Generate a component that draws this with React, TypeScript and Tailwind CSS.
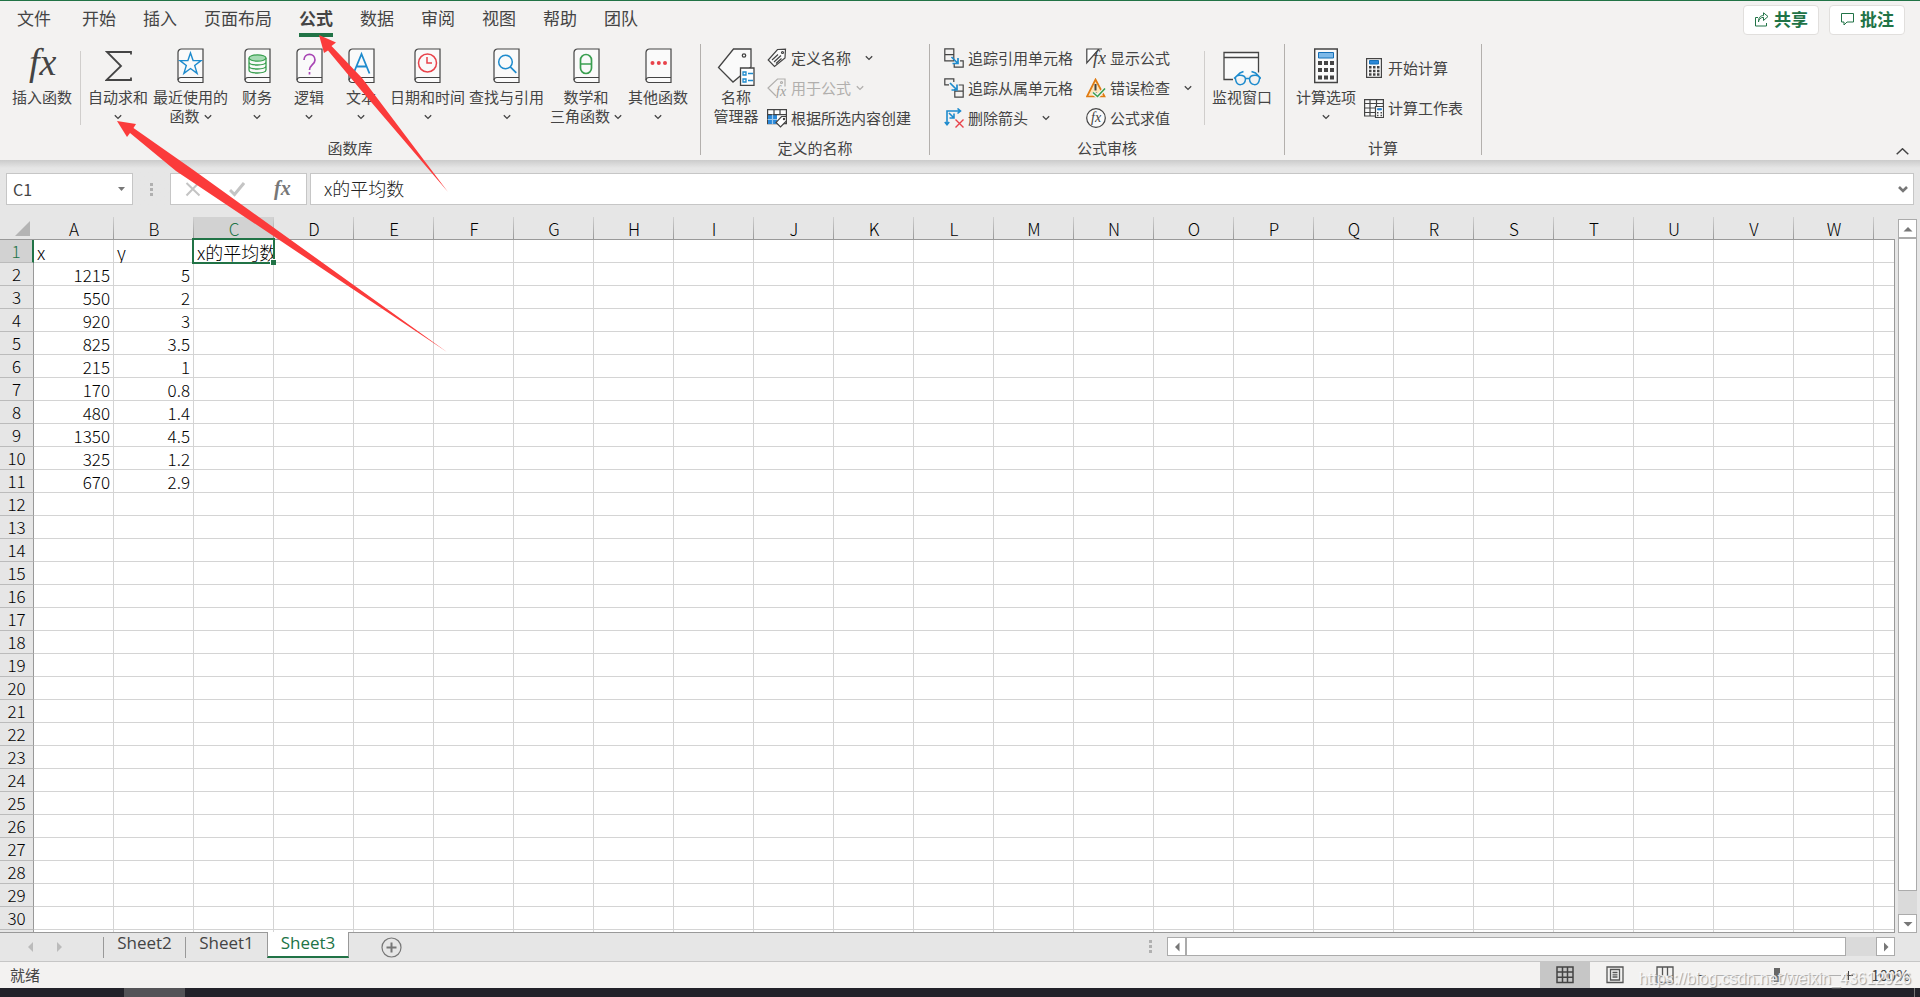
import { Fragment, type ReactNode } from "react"
import clsx from "clsx"

const MENU = ["文件", "开始", "插入", "页面布局", "公式", "数据", "审阅", "视图", "帮助", "团队"]
const COLUMNS = [..."ABCDEFGHIJKLMNOPQRSTUVW", ""]
const ROW_COUNT = 30

const DATA: string[][] = [
  ["x", "y", "x的平均数"],
  ["1215", "5"],
  ["550", "2"],
  ["920", "3"],
  ["825", "3.5"],
  ["215", "1"],
  ["170", "0.8"],
  ["480", "1.4"],
  ["1350", "4.5"],
  ["325", "1.2"],
  ["670", "2.9"],
]

const App = () => {
  return (
    <div className="relative flex h-screen w-full flex-col overflow-hidden bg-[#e6e6e6] font-['Noto_Sans_CJK_SC',sans-serif] text-[#444]">
      <header className="border-t border-[#217346] bg-[#f3f2f1]">
        <MenuBar />
        <Ribbon />
      </header>
      <FormulaBar />
      <main className="flex min-h-0 flex-1">
        <Sheet />
        <VerticalScroll />
      </main>
      <SheetTabs />
      <StatusBar />
      <Taskbar />
      <Arrows />
      <span className="pointer-events-none absolute right-[9px] bottom-2 font-['Liberation_Sans',sans-serif] text-base leading-5 text-white/80 [text-shadow:1px_1px_1px_#999]">
        https://blog.csdn.net/weixin_43612926
      </span>
    </div>
  )
}

const MenuBar = () => (
  <div className="flex justify-between">
    <nav className="flex gap-[27px] pl-[17px]">
      {MENU.map((item) => (
        <button
          key={item}
          className={clsx(
            "h-9 border-b-4 pt-[2px] text-[17px] leading-[30px] first:mr-1",
            item === "公式" ? "border-[#217346] font-bold" : "border-transparent"
          )}
        >
          {item}
        </button>
      ))}
    </nav>
    <div className="flex gap-[10px] pt-1 pr-[15px]">
      <HeaderButton label="共享">
        <path d="M4 5.500H1.500v8.500h11V11M4.500 10c.3-3 2-4.500 5-4.700V8.500L14 4.500 9.500.8v2.700C6 3.600 4.300 6 4.500 10z" />
      </HeaderButton>
      <HeaderButton label="批注">
        <path d="M1.500 1.500h12v8.500H7l-3 3v-3H1.500z" />
      </HeaderButton>
    </div>
  </div>
)

const HeaderButton = ({ label, children }: { label: string; children: ReactNode }) => (
  <button className="flex h-[30px] w-[76px] items-center justify-center gap-[5px] rounded border border-[#e1dfdd] bg-white pb-[2px] text-[17px] leading-6 font-bold text-[#217346]">
    <svg className="size-[15px]" viewBox="0 0 15 15" fill="none" stroke="currentColor">
      {children}
    </svg>
    {label}
  </button>
)

const Chevron = ({ className }: { className?: string }) => (
  <svg className={clsx("h-[6px] w-2 shrink-0", className)} viewBox="0 0 8 6" fill="none" stroke="currentColor" strokeWidth="1.3">
    <path d="M.8 1.200 4 4.400l3.200-3.200" />
  </svg>
)

interface BigButtonProps {
  lines: string[]
  className: string
  icon: ReactNode
  menu?: boolean
}

const BigButton = ({ lines, className, icon, menu }: BigButtonProps) => (
  <button className={clsx("flex shrink-0 flex-col items-center self-start pt-1 text-[15px] leading-[19px] whitespace-nowrap", className)}>
    <span className="mb-[3px] flex h-9 items-start justify-center">{icon}</span>
    <span>{lines[0]}</span>
    {(lines[1] || menu) && (
      <span className="flex h-[19px] items-center gap-1">
        {lines[1]}
        {menu && <Chevron className="mt-[2px]" />}
      </span>
    )}
  </button>
)

interface SmallButtonProps {
  label: string
  icon: ReactNode
  disabled?: boolean
  chevron?: string
}

const SmallButton = ({ label, icon, disabled, chevron }: SmallButtonProps) => (
  <button
    disabled={disabled}
    className={clsx("flex h-[30px] items-center gap-1 pb-[2px] text-[15px] leading-5 whitespace-nowrap", disabled && "text-[#b1afad]")}
  >
    <svg className="size-5 shrink-0" viewBox="0 0 20 20" fill="none" stroke="currentColor" strokeWidth="1.2">
      {icon}
    </svg>
    {label}
    {chevron && <Chevron className={chevron} />}
  </button>
)

const Group = ({ label, className, children }: { label: string; className?: string; children: ReactNode }) => (
  <section className="flex flex-col border-r border-[#b3b0ad]">
    <div className={clsx("flex flex-1", className)}>{children}</div>
    <h2 className="text-center text-[15px] leading-[14px]">{label}</h2>
  </section>
)

const Divider = ({ className }: { className?: string }) => (
  <span className={clsx("mt-[7px] h-[74px] w-px shrink-0 bg-[#d0cecc]", className)} />
)

/* closed book used by every function category */
const Book = ({ children }: { children: ReactNode }) => (
  <svg className="h-9 w-[27px]" viewBox="0 0 27 36" fill="none" strokeWidth="1.2">
    <path d="M4.500 1H26v33.500H4A3 3 0 0 1 1 31.500V4.500A3.500 3.500 0 0 1 4.500 1z" fill="#fafafa" stroke="#444" />
    <path d="M26 29.500H4A3 3 0 0 0 1 32" stroke="#444" />
    {children}
  </svg>
)

const Fx = ({ x, y, size, color = "#444" }: { x: number; y: number; size: number; color?: string }) => (
  <text x={x} y={y} fontSize={size} fill={color} fontStyle="italic" fontFamily="Liberation Serif, serif" stroke="none">
    fx
  </text>
)

const Ribbon = () => (
  <div className="relative flex h-[123px] pt-[7px] pb-[5px]">
    <Group label="函数库" className="pr-2 pl-1">
      <BigButton
        className="w-[76px]"
        lines={["插入函数"]}
        icon={
          <svg className="h-9 w-8 overflow-visible" viewBox="0 0 32 36">
            <Fx x={3} y={27} size={38} />
          </svg>
        }
      />
      <Divider className="mr-[2px]" />
      <BigButton
        className="w-[70px]"
        menu
        lines={["自动求和"]}
        icon={
          <svg className="h-9 w-[27px]" viewBox="0 0 27 36" fill="none" stroke="#444" strokeWidth="1.8">
            <path d="M26 6.500V4H2l14 14L1.500 32H26v-2.500" />
          </svg>
        }
      />
      <BigButton
        className="w-[75px]"
        menu
        lines={["最近使用的", "函数"]}
        icon={
          <Book>
            <path d="m13.500 5 2.600 7.600H24l-6.300 4.800 2.400 8-6.600-4.900-6.600 4.900 2.400-8L3 12.600h7.900z" stroke="#1e8bcd" strokeWidth="1.400" />
          </Book>
        }
      />
      <BigButton
        className="w-[58px]"
        menu
        lines={["财务"]}
        icon={
          <Book>
            <g stroke="#3a9f50" strokeWidth="1.300">
              <path d="M5 10v12c0 4 17 4 17 0V10M5 14c0 4 17 4 17 0M5 18c0 4 17 4 17 0" />
              <ellipse cx="13.500" cy="10" rx="8.500" ry="3.200" fill="#a5dbb3" />
            </g>
          </Book>
        }
      />
      <BigButton
        className="w-[46px]"
        menu
        lines={["逻辑"]}
        icon={
          <Book>
            <path d="M8 12c0-7.500 11-7.500 11 0 0 4.500-5.500 5-5.500 10M13.500 24v2.500" stroke="#a846b4" strokeWidth="1.700" />
          </Book>
        }
      />
      <BigButton
        className="w-[58px]"
        menu
        lines={["文本"]}
        icon={
          <Book>
            <path d="m5.500 25.500 8-19.500 8 19.500M8.500 18.500h10" stroke="#1e8bcd" strokeWidth="1.800" />
          </Book>
        }
      />
      <BigButton
        className="w-[75px]"
        menu
        lines={["日期和时间"]}
        icon={
          <Book>
            <circle cx="13.500" cy="15" r="9" stroke="#e8424a" strokeWidth="1.500" />
            <path d="M13 9v6h5" stroke="#e8424a" strokeWidth="1.500" />
          </Book>
        }
      />
      <BigButton
        className="w-[83px]"
        menu
        lines={["查找与引用"]}
        icon={
          <Book>
            <circle cx="12.500" cy="14" r="6.800" stroke="#1e8bcd" strokeWidth="1.500" />
            <path d="m17.300 18.800 6 6" stroke="#1e8bcd" strokeWidth="1.700" />
          </Book>
        }
      />
      <BigButton
        className="w-[76px]"
        menu
        lines={["数学和", "三角函数"]}
        icon={
          <Book>
            <rect x="7.500" y="6.500" width="11" height="19" rx="5.500" stroke="#3a9f50" strokeWidth="1.700" />
            <path d="M7.500 16h11" stroke="#3a9f50" strokeWidth="1.500" />
          </Book>
        }
      />
      <BigButton
        className="w-[68px]"
        menu
        lines={["其他函数"]}
        icon={
          <Book>
            <g fill="#e8424a">
              <circle cx="7.500" cy="15" r="2" />
              <circle cx="13.800" cy="15" r="2" />
              <circle cx="20" cy="15" r="2" />
            </g>
          </Book>
        }
      />
    </Group>

    <Group label="定义的名称" className="pr-[18px] pl-1">
      <BigButton
        className="w-[62px]"
        lines={["名称", "管理器"]}
        icon={
          <svg className="h-[38px] w-[38px]" viewBox="0 0 38 38" fill="none" stroke="#444" strokeWidth="1.300">
            <path d="M16.500 1H34v18L16 34 1.500 19.500z" fill="#fafafa" />
            <circle cx="27" cy="7.500" r="1.700" />
            <path d="M23.500 20H37v17.500H23.500z" fill="#fff" />
            <g stroke="#1e8bcd">
              <path d="M26 24h3v3h-3zM26 31h3v3h-3zM31 25.500h5M31 32.500h5" />
            </g>
          </svg>
        }
      />
      <div className="flex flex-col">
        <SmallButton
          label="定义名称"
          chevron="ml-[10px]"
          icon={
            <>
              <path d="M10.500 1.500 18.500 1.200 18 10 7.500 18.500 1.200 12z" fill="#fafafa" />
              <circle cx="15.500" cy="4.500" r="1" />
              <path d="m5 12 6-5.500M7 14l7-6.500M9 15.500l5.500-5" />
            </>
          }
        />
        <SmallButton
          label="用于公式"
          disabled
          chevron="ml-[1px]"
          icon={
            <>
              <path d="M18 8.500V1h-7.500L1 10l8 8" />
              <circle cx="14.500" cy="4.500" r="1" />
              <Fx x={9} y={18} size={14} color="#a19f9d" />
            </>
          }
        />
        <SmallButton
          label="根据所选内容创建"
          icon={
            <>
              <path d="M.6 1.600h18.800v14H.6z" fill="#fff" />
              <path d="M1 7h9v9H1z" fill="#2b88d8" stroke="none" />
              <path d="M.6 6.600h18.800M7 1.600v5M13 1.600v5" />
              <path d="M.6 11.500H10M5.500 6.600V16" stroke="#9fcbee" />
              <path d="M14.500 8.500h4.900v4.500L13.500 19 9 14.500z" fill="#fff" />
              <circle cx="17" cy="11" r=".6" />
            </>
          }
        />
      </div>
    </Group>

    <Group label="公式审核" className="pr-[5px] pl-[14px]">
      <div className="mr-[13px] flex flex-col">
        <SmallButton
          label="追踪引用单元格"
          icon={
            <>
              <path d="M.8.800h9v12h-9zM.8 6.600h9M16 12.800h3.200v6.400h-9V16" />
              <path d="m7.500 9 6 6M14 10v5.500H8.500" stroke="#1e8bcd" strokeWidth="1.700" />
            </>
          }
        />
        <SmallButton
          label="追踪从属单元格"
          icon={
            <>
              <path d="M5 6.800H.8v-6h9V4M10.800 11V19.200h8.400V7h-4.500M10.800 13.200h8.400" />
              <path d="m6 5 6.500 6.500M13 6.500V12H7.500" stroke="#1e8bcd" strokeWidth="1.700" />
            </>
          }
        />
        <SmallButton
          label="删除箭头"
          chevron="ml-[10px]"
          icon={
            <>
              <path d="M3 17V3h13M.8 14 3 16.800 5.200 14M13.500.5 16.500 3l-3 2.500M5 5l5 5M10 5.500V10H5.500" stroke="#1e8bcd" strokeWidth="1.600" />
              <path d="m11.500 11.500 8 8M19.500 11.500l-8 8" stroke="#e8424a" strokeWidth="1.400" />
            </>
          }
        />
      </div>
      <div className="flex flex-col">
        <SmallButton
          label="显示公式"
          icon={
            <>
              <path d="M16 1H.8v14L13 1" fill="#fff" />
              <Fx x={7} y={16} size={18} />
            </>
          }
        />
        <SmallButton
          label="错误检查"
          chevron="ml-[10px]"
          icon={
            <>
              <path d="M9.500 1.500 18.500 18.500H1z" fill="#fce4b8" stroke="#e07b12" strokeWidth="1.700" />
              <path d="M9.500 6v6.500M9.500 14v2" strokeWidth="2" />
              <path d="m7 14.500 4.500 4 7.500-8" stroke="#f3f2f1" strokeWidth="4" />
              <path d="m7 14.500 4.500 4 7.500-8" stroke="#3a9f50" strokeWidth="1.600" />
            </>
          }
        />
        <SmallButton
          label="公式求值"
          icon={
            <>
              <circle cx="10" cy="10" r="9.300" fill="#fafafa" />
              <Fx x={5} y={14} size={14} />
            </>
          }
        />
      </div>
      <Divider className="ml-3" />
      <BigButton
        className="w-[74px]"
        lines={["监视窗口"]}
        icon={
          <svg className="h-[38px] w-[38px]" viewBox="0 0 38 38" fill="none" stroke="#444" strokeWidth="1.300">
            <path d="M10 31.500H1V4.500h34.500v20" fill="#fafafa" />
            <path d="M1 9.500h34.500" />
            <path d="M12.500 31c-1-5 9.500-5 10 0-.5 7-9 8-10 0zM26.500 31c.5-5 11-5 10 0-1 8-9.500 7-10 0zM22.500 30.500h4M11 30.500l6-5.500 3.500-1.500M38 30.500l-5.500-5.500-4-1.500" stroke="#1e8bcd" strokeWidth="1.500" />
          </svg>
        }
      />
    </Group>

    <Group label="计算" className="pr-[18px] pl-[3px]">
      <BigButton
        className="w-[76px]"
        menu
        lines={["计算选项"]}
        icon={
          <svg className="h-9 w-6" viewBox="0 0 24 36">
            <path d="M.7 1h22.600v33.500H.7z" fill="#fafafa" stroke="#444" strokeWidth="1.400" />
            <path d="M4.500 4.500h15V10h-15z" fill="#7db9e8" stroke="#1570b8" />
            <path d="M4 13h4v4H4zM10 13h4v4h-4zM16 13h4v4h-4zM4 20h4v4H4zM10 20h4v4h-4zM16 20h4v4h-4zM4 27.500h4v4H4zM10 27.500h4v4h-4zM16 27.500h4v4h-4z" fill="#444" />
          </svg>
        }
      />
      <div className="flex flex-col gap-[10px] pt-[10px]">
        <SmallButton
          label="开始计算"
          icon={
            <>
              <path d="M2.600.7h14.800v18.600H2.600z" fill="#fafafa" />
              <path d="M5.500 2.500h9V6h-9z" fill="#2b88d8" stroke="#1570b8" strokeWidth="1" />
              <path d="M5 8h2.500v2.500H5zM9 8h2.500v2.500H9zM13 8h2.500v2.500H13zM5 11.700h2.500v2.500H5zM9 11.700h2.500v2.500H9zM13 11.700h2.500v2.500H13zM5 15.300h2.500v2.500H5zM9 15.300h2.500v2.500H9zM13 15.300h2.500v2.500H13z" fill="#444" stroke="none" />
            </>
          }
        />
        <SmallButton
          label="计算工作表"
          icon={
            <>
              <path d="M.6 1.600h18.800V18H.6z" fill="#fafafa" />
              <path d="M.6 5.500h18.800M.6 10H11M.6 14.500H11M6 1.600V18M12.500 1.600V8" />
              <path d="M11.500 8.500h8v11h-8z" fill="#fff" />
              <path d="M13.500 10.500h4V12h-4z" fill="#2b88d8" stroke="#1570b8" strokeWidth=".6" />
              <path d="M13 14h1.500v1.500H13zM16.500 14H18v1.500h-1.500zM13 16.800h1.500v1.500H13zM16.500 16.800H18v1.500h-1.500z" fill="#444" stroke="none" />
            </>
          }
        />
      </div>
    </Group>

    <button aria-label="折叠功能区" className="mr-[11px] ml-auto self-end">
      <svg className="h-[7px] w-[13px]" viewBox="0 0 13 7" fill="none" stroke="#444" strokeWidth="1.500">
        <path d="M.7 6.300 6.500.8l5.800 5.500" />
      </svg>
    </button>
  </div>
)

const Dots = ({ className }: { className?: string }) => (
  <span className={clsx("flex flex-col gap-[2px]", className)}>
    <i className="size-[3px] bg-[#b0b0b0]" />
    <i className="size-[3px] bg-[#b0b0b0]" />
    <i className="size-[3px] bg-[#b0b0b0]" />
  </span>
)

const FormulaBar = () => (
  <div className="flex items-center bg-linear-to-b from-[#cbcbcb] to-[#e6e6e6] to-[8px] pt-[13px] pr-[6px] pl-[6px]">
    <div className="flex h-8 w-[127px] items-center border border-[#c6c6c6] bg-white pr-[7px] pl-[6px]">
      <input aria-label="名称框" defaultValue="C1" className="min-w-0 flex-1 text-base leading-6 outline-none" />
      <svg className="h-1 w-[7px]" viewBox="0 0 7 4" fill="#777">
        <path d="M0 0h7L3.500 4z" />
      </svg>
    </div>
    <Dots className="mx-[17px]" />
    <div className="flex h-8 w-[137px] items-center justify-between border border-[#c6c6c6] bg-white pr-[15px] pl-[14px]">
      <button aria-label="取消">
        <svg className="size-4" viewBox="0 0 16 16" fill="none" stroke="#c4c4c4" strokeWidth="2">
          <path d="m1.500 2 13 12.500M14 1.500l-12.500 13" />
        </svg>
      </button>
      <button aria-label="输入">
        <svg className="size-4" viewBox="0 0 16 16" fill="none" stroke="#c4c4c4" strokeWidth="3">
          <path d="m1 9 4.500 4.500L15 2" />
        </svg>
      </button>
      <button aria-label="插入函数">
        <svg className="h-[22px] w-[18px] overflow-visible" viewBox="0 0 18 22" fontWeight="bold">
          <Fx x={1} y={17} size={20} color="#777" />
        </svg>
      </button>
    </div>
    <div className="ml-[3px] flex h-8 flex-1 items-center border border-[#c6c6c6] bg-white pr-[5px] pl-[13px]">
      <input aria-label="编辑栏" defaultValue="x的平均数" className="min-w-0 flex-1 pb-[2px] text-[18px] leading-6 font-light text-[#222] outline-none" />
      <svg className="h-[7px] w-[10px]" viewBox="0 0 10 7" fill="none" stroke="#777" strokeWidth="2.600">
        <path d="m1 1 4 4 4-4" />
      </svg>
    </div>
  </div>
)

const Sheet = () => (
  <div className="relative min-w-0 flex-1 overflow-hidden border-b border-[#999] pt-3">
    <table className="w-[1954px] table-fixed border-separate border-spacing-0 font-light text-black">
      <thead>
        <tr className="h-[23px]">
          <th className="w-[34px] border-b border-[#999] p-0">
            <svg className="ml-[15px] block h-[15px] w-[15px]" viewBox="0 0 15 15" fill="#b4b4b4">
              <path d="M15 0v15H0z" />
            </svg>
          </th>
          {COLUMNS.map((name) => (
            <th
              key={name}
              className={clsx(
                "h-[23px] w-20 border-b border-[#999] bg-[linear-gradient(#d0d0d0,#999)] bg-[length:1px_100%] bg-right bg-no-repeat p-0 pt-[2px] text-[17px] leading-5 font-light",
                name === "C" && "bg-[#d2d2d2] text-[#217346]"
              )}
            >
              {name}
            </th>
          ))}
        </tr>
      </thead>
      <tbody>
        {Array.from({ length: ROW_COUNT + 1 }, (_, row) => (
          <tr key={row}>
            <th
              className={clsx(
                "h-[23px] border-b border-[#bbb] p-0 text-[17px] leading-[22px] font-light",
                row === 0 ? "border-r-2 border-r-[#217346] bg-[#d2d2d2] text-[#217346]" : "border-r border-r-[#999]"
              )}
            >
              {row < ROW_COUNT && row + 1}
            </th>
            {COLUMNS.map((name, col) => (
              <Cell key={name} value={DATA[row]?.[col]} heading={row === 0} active={row === 0 && col === 2} />
            ))}
          </tr>
        ))}
      </tbody>
    </table>
    <span className="absolute top-[34px] right-0 bottom-0 w-px bg-[#999]" />
  </div>
)

interface CellProps {
  value?: string
  heading: boolean
  active: boolean
}

const Cell = ({ value, heading, active }: CellProps) => (
  <td className={clsx("relative h-[23px] border-r border-b border-[#d4d4d4] bg-white p-0", active && "z-10")}>
    {value && (
      <div
        className={clsx(
          "h-[22px] whitespace-nowrap",
          heading ? "pl-[3px] text-[18px] leading-6" : "pr-[3px] text-right text-[17px] leading-6",
          active && "overflow-x-clip"
        )}
      >
        {value}
      </div>
    )}
    {active && (
      <>
        <span className="absolute -top-[2px] -right-[2px] -bottom-[2px] -left-[2px] border-2 border-[#217346]" />
        <span className="absolute -right-[3px] -bottom-[3px] size-[6px] border-t border-l border-white bg-[#217346]" />
      </>
    )}
  </td>
)

const ARROWS = {
  up: "M5 3 9.500 7.500h-9z",
  down: "M5 7.500.5 3h9z",
  left: "M3 5l4.500-4.500v9z",
  right: "M7.500 5 3 .5v9z",
}

const ScrollButton = ({ dir }: { dir: keyof typeof ARROWS }) => (
  <button aria-label={dir} className="flex size-[19px] shrink-0 items-center justify-center border border-[#ababab] bg-white">
    <svg className="size-[10px]" viewBox="0 0 10 10" fill="#777">
      <path d={ARROWS[dir]} />
    </svg>
  </button>
)

const VerticalScroll = () => (
  <div className="mt-[14px] mr-[3px] ml-[3px] flex w-[19px] flex-col bg-[#dadada]">
    <ScrollButton dir="up" />
    <span className="mb-[23px] flex-1 border border-[#ababab] bg-white" />
    <ScrollButton dir="down" />
  </div>
)

const SheetTabs = () => (
  <div className="flex h-[29px] items-start justify-between border-b border-[#c6c6c6]">
    <div className="flex items-start">
      <div className="flex w-[103px] gap-6 pt-[9px] pl-7">
        <svg className="h-[10px] w-[5px]" viewBox="0 0 5 10" fill="#bbb">
          <path d="M5 0v10L0 5z" />
        </svg>
        <svg className="h-[10px] w-[5px]" viewBox="0 0 5 10" fill="#bbb">
          <path d="M0 0v10l5-5z" />
        </svg>
      </div>
      {["Sheet2", "Sheet1", "Sheet3"].map((name) => (
        <Fragment key={name}>
          {name === "Sheet3" ? (
            <button className="z-10 -mt-px h-[26px] w-[82px] border-x border-b-2 border-x-[#999] border-b-[#217346] bg-white pb-[2px] font-['Open_Sans',sans-serif] text-[17px] leading-[22px] text-[#217346]">
              {name}
            </button>
          ) : (
            <button className="mt-1 h-[21px] w-[82px] border-l border-[#999] pb-[9px] font-['Open_Sans',sans-serif] text-[17px] leading-3">
              {name}
            </button>
          )}
        </Fragment>
      ))}
      <button aria-label="新工作表" className="mt-1 ml-8">
        <svg className="size-[21px]" viewBox="0 0 21 21" fill="none" stroke="#777">
          <circle cx="10.500" cy="10.500" r="9.500" strokeWidth="1.200" />
          <path d="M10.500 5.500v10M5.500 10.500h10" strokeWidth="2" />
        </svg>
      </button>
    </div>
    <div className="flex w-[calc(40%+3px)] items-center pt-1">
      <Dots />
      <div className="mr-[25px] ml-[15px] flex flex-1 bg-[#dadada]">
        <ScrollButton dir="left" />
        <span className="mr-[30px] flex-1 border border-[#ababab] bg-white" />
        <ScrollButton dir="right" />
      </div>
    </div>
  </div>
)

const StatusBar = () => (
  <footer className="flex h-[26px] items-center justify-between bg-[#f3f2f1] pr-[10px] pl-[10px]">
    <span className="text-[15px] leading-5">就绪</span>
    <div className="flex h-full items-center">
      <button aria-label="普通" className="flex h-full w-[50px] items-center justify-center bg-[#c6c6c6]">
        <svg className="size-[18px]" viewBox="0 0 18 18" fill="none" stroke="#444" strokeWidth="1.500">
          <path d="M1 1h16v15.500H1zM6.500 1v15.500M11.500 1v15.500M1 6h16M1 11.300h16" />
        </svg>
      </button>
      <button aria-label="页面布局" className="flex h-full w-[50px] items-center justify-center">
        <svg className="size-[18px]" viewBox="0 0 18 18" fill="none" stroke="#555" strokeWidth="1.300">
          <path d="M1 1h16v15.500H1zM4.500 3.500h9V14h-9zM6.500 6.500h5M6.500 8.800h5M6.500 11h5" />
        </svg>
      </button>
      <button aria-label="分页预览" className="flex h-full w-[50px] items-center justify-center">
        <svg className="size-[18px]" viewBox="0 0 18 18" fill="none" stroke="#555" strokeWidth="1.300">
          <path d="M1 1h16v15.500H1zM6.500 1v9M11.500 1v9M1 10h5.500M11.500 10H17" />
        </svg>
      </button>
      <button aria-label="缩小" className="mx-[7px] h-px w-[9px] bg-[#444]" />
      <input
        type="range"
        aria-label="显示比例"
        min={0}
        max={100}
        defaultValue={50}
        className="h-[14px] w-[128px] appearance-none bg-[linear-gradient(#b0b0b0,#b0b0b0)] bg-[length:100%_1px] bg-center bg-no-repeat [&::-webkit-slider-thumb]:h-[14px] [&::-webkit-slider-thumb]:w-[6px] [&::-webkit-slider-thumb]:appearance-none [&::-webkit-slider-thumb]:bg-[#666]"
      />
      <button aria-label="放大" className="mr-[6px] ml-[3px]">
        <svg className="size-[9px]" viewBox="0 0 9 9" stroke="#444">
          <path d="M4.500 0v9M0 4.500h9" />
        </svg>
      </button>
      <span className="ml-3 text-[15px] leading-5">100%</span>
    </div>
  </footer>
)

const Taskbar = () => (
  <div className="flex h-[9px] bg-[#22222a] pr-[5px] pl-[124px]">
    <span className="w-[61px] bg-[#535357]" />
    <span className="ml-auto w-px bg-[#777]" />
  </div>
)

const Arrows = () => (
  <svg className="pointer-events-none absolute top-0 left-0 z-20 h-[360px] w-[460px]" viewBox="0 0 460 360" fill="#fb3b3b">
    <path d="M319 35 336 42.500 331.500 46 362 78 448 192 360 89 328 50.500 324 53z" />
    <path d="M117 121 136 124 133.500 128 192 169 447 352 176 171 130 133 127 137z" />
  </svg>
)

export default App
